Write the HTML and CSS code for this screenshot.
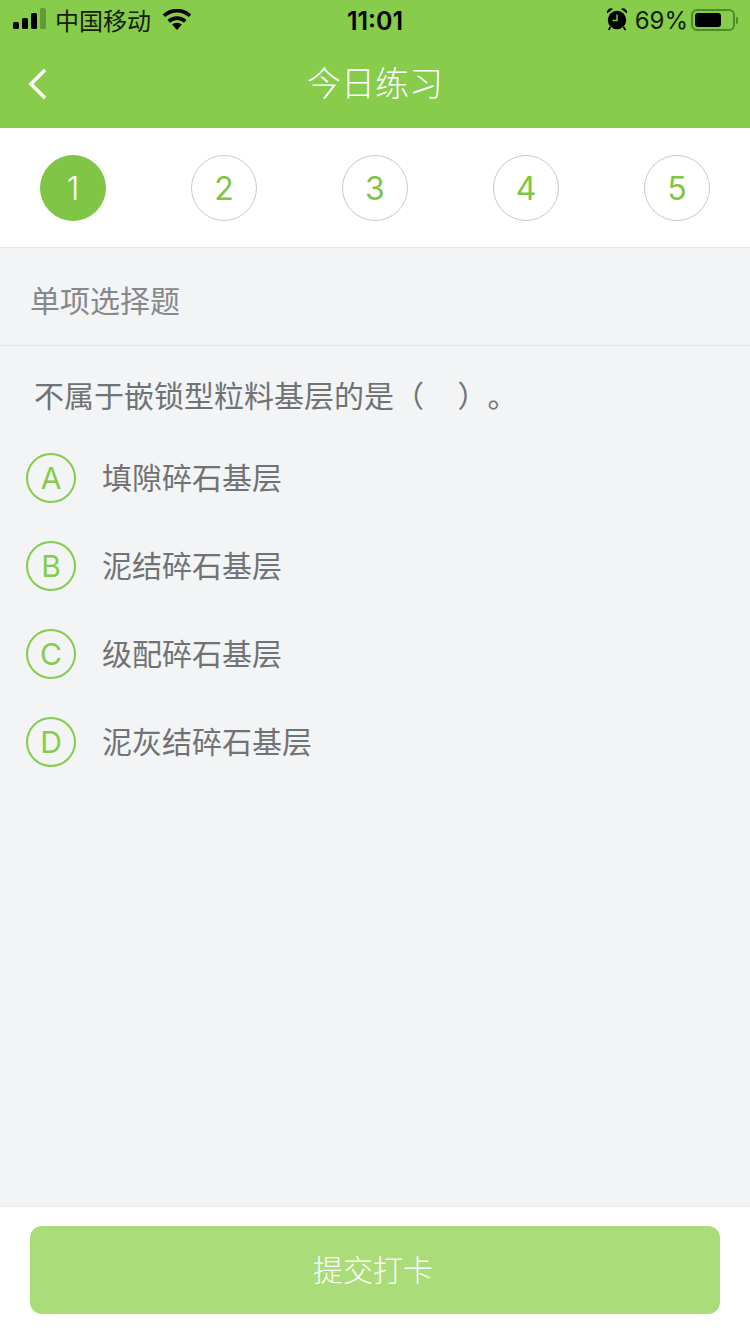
FILE: index.html
```html
<!DOCTYPE html>
<html lang="zh-CN">
<head>
<meta charset="utf-8">
<title>今日练习</title>
<link rel="stylesheet" href="styles.css">
</head>
<body>
<div class="page">
  <header class="header">
    <div class="status">
      <div class="status-left">
        <svg class="signal" width="34" height="24" viewBox="0 0 34 24"><rect x="0" y="14" width="6" height="7" rx="1.5" fill="#000"/><rect x="9" y="10" width="6" height="11" rx="1.5" fill="#000"/><rect x="18" y="5" width="6" height="16" rx="1.5" fill="#000"/><rect x="27" y="0" width="6" height="21" rx="1.5" fill="#000" fill-opacity=".25"/></svg>
        <span class="carrier">中国移动</span>
        <svg class="wifi" width="30" height="22" viewBox="0 0 30 22"><path d="M15 21l-4.9-5.4a7.2 7.2 0 0 1 9.8 0z" fill="#000"/><path d="M6.8 12.4a12 12 0 0 1 16.4 0M2 6.800a18.800 18.800 0 0 1 26 0" fill="none" stroke="#000" stroke-width="3.6" stroke-linecap="butt"/></svg>
      </div>
      <div class="time">11:01</div>
      <div class="status-right">
        <svg class="alarm" width="22" height="24" viewBox="0 0 22 24"><circle cx="11" cy="13" r="9.2" fill="#000"/><path d="M11 7.500V13.500H6.500" fill="none" stroke="#87cd4b" stroke-width="1.4"/><path d="M1 6.500a4 4 0 0 1 6-4.500zM21 6.500a4 4 0 0 0-6-4.500z" fill="#000"/><path d="M4.500 20l-2 3M17.500 20l2 3" stroke="#000" stroke-width="1.800"/></svg>
        <span class="battery-pct">69%</span>
        <span class="battery"><span class="battery-fill"></span></span>
        <span class="battery-cap"></span>
      </div>
    </div>
    <div class="navbar">
      <svg class="back" width="22" height="34" viewBox="0 0 22 34"><path d="M18 3L4 17l14 14" fill="none" stroke="#fff" stroke-width="3.6"/></svg>
      <h1 class="title">今日练习</h1>
    </div>
  </header>

  <nav class="steps">
    <span class="step step-active">1</span>
    <span class="step">2</span>
    <span class="step">3</span>
    <span class="step">4</span>
    <span class="step">5</span>
  </nav>

  <main class="content">
    <div class="section-title">单项选择题</div>
    <p class="question">不属于嵌锁型粒料基层的是（&nbsp;&nbsp;&nbsp;&nbsp;&nbsp;）。</p>
    <ul class="options">
      <li class="option"><span class="badge">A</span><span class="option-text">填隙碎石基层</span></li>
      <li class="option"><span class="badge">B</span><span class="option-text">泥结碎石基层</span></li>
      <li class="option"><span class="badge">C</span><span class="option-text">级配碎石基层</span></li>
      <li class="option"><span class="badge">D</span><span class="option-text">泥灰结碎石基层</span></li>
    </ul>
  </main>

  <footer class="footer">
    <button class="submit" type="button"><span class="submit-label">提交打卡</span></button>
  </footer>
</div>
</body>
</html>
```

FILE: styles.css
```css
* { box-sizing: border-box; }
html, body { margin: 0; padding: 0; }
body {
  font-family: "Noto Sans CJK SC", "Noto Sans", sans-serif;
  background: #f2f4f6;
}
.page {
  width: 750px;
  height: 1334px;
  display: flex;
  flex-direction: column;
  overflow: hidden;
}
.header {
  height: 128px;
  background: #87cc4b;
  flex: none;
}
.status {
  height: 40px;
  display: grid;
  grid-template-columns: 1fr auto 1fr;
  align-items: center;
  padding: 0 11px 0 13px;
  color: #000;
}
.status-left { display: flex; align-items: center; }
.signal { margin-right: 8px; }
.carrier { font-size: 24px; line-height: 40px; font-weight: 400; color: #14200c; }
.wifi { margin-left: 11px; }
.time {
  font-family: Inter, "Liberation Sans", sans-serif;
  font-size: 25px;
  font-weight: 600;
  padding-top: 1px;
  margin-left: -2px;
}
.status-right { display: flex; align-items: center; justify-content: flex-end; }
.alarm { margin-right: 7px; position: relative; top: -1px; }
.battery-pct {
  font-family: Inter, "Liberation Sans", sans-serif;
  font-size: 24px;
  margin-right: 3px;
  padding-top: 1px;
  color: #10200a;
}
.battery {
  width: 44px;
  height: 22px;
  border: 2px solid #4f8a2c;
  border-radius: 6px;
  padding: 2px;
  display: flex;
}
.battery-fill { width: 26px; background: #000; border-radius: 3px; }
.battery-cap {
  width: 2px;
  height: 7px;
  margin-left: 1px;
  margin-right: 1px;
  background: #4f8a2c;
  border-radius: 0 2px 2px 0;
}
.navbar {
  height: 88px;
  display: flex;
  align-items: center;
  justify-content: center;
  position: relative;
  padding-bottom: 5px;
}
.back { position: absolute; left: 27px; top: 27px; }
.title {
  margin: 0;
  font-size: 34px;
  font-weight: 300;
  color: #fff;
}
.steps {
  height: 120px;
  flex: none;
  background: #fff;
  border-bottom: 1px solid #e6e6e6;
  display: flex;
  justify-content: space-between;
  align-items: center;
  padding: 1px 40px 0;
}
.step {
  width: 66px;
  height: 66px;
  border: 1px solid #c9c9c9;
  border-radius: 50%;
  display: flex;
  align-items: center;
  justify-content: center;
  font-family: Inter, "Liberation Sans", sans-serif;
  font-size: 32px;
  font-weight: 400;
  color: #80c545;
}
.step-active {
  background: #80c545;
  border-color: #80c545;
  color: #fff;
  font-weight: 300;
}
.content { flex: 1; min-height: 0; }
.section-title {
  height: 98px;
  border-bottom: 1px solid #e4e6e8;
  padding: 5px 0 0 30px;
  display: flex;
  align-items: center;
  font-size: 30px;
  font-weight: 400;
  color: #86888a;
}
.question {
  margin: 0;
  height: 88px;
  padding: 0 0 0 34px;
  line-height: 96px;
  font-size: 30px;
  font-weight: 400;
  color: #707274;
  white-space: nowrap;
  text-spacing-trim: space-all;
}
.options {
  list-style: none;
  margin: 0;
  padding: 0 0 0 26px;
}
.option {
  height: 88px;
  display: flex;
  align-items: center;
}
.badge {
  width: 50px;
  height: 50px;
  border: 2px solid #86cc4a;
  border-radius: 50%;
  display: flex;
  align-items: center;
  justify-content: center;
  font-family: Inter, "Liberation Sans", sans-serif;
  font-size: 30px;
  font-weight: 400;
  color: #86cc4a;
  flex: none;
}
.option-text {
  margin-left: 26px;
  padding-bottom: 5px;
  font-size: 30px;
  font-weight: 400;
  color: #707274;
}
.footer {
  height: 128px;
  flex: none;
  background: #fff;
  border-top: 1px solid #e8eaec;
  padding: 19px 30px 20px;
}
.submit {
  display: flex;
  align-items: center;
  justify-content: center;
  width: 690px;
  height: 88px;
  border: 0;
  border-radius: 12px;
  background: #aadc79;
  color: #fff;
  font-family: inherit;
  font-size: 30px;
  font-weight: 300;
  padding: 0 4px 4px 0;
}
```
